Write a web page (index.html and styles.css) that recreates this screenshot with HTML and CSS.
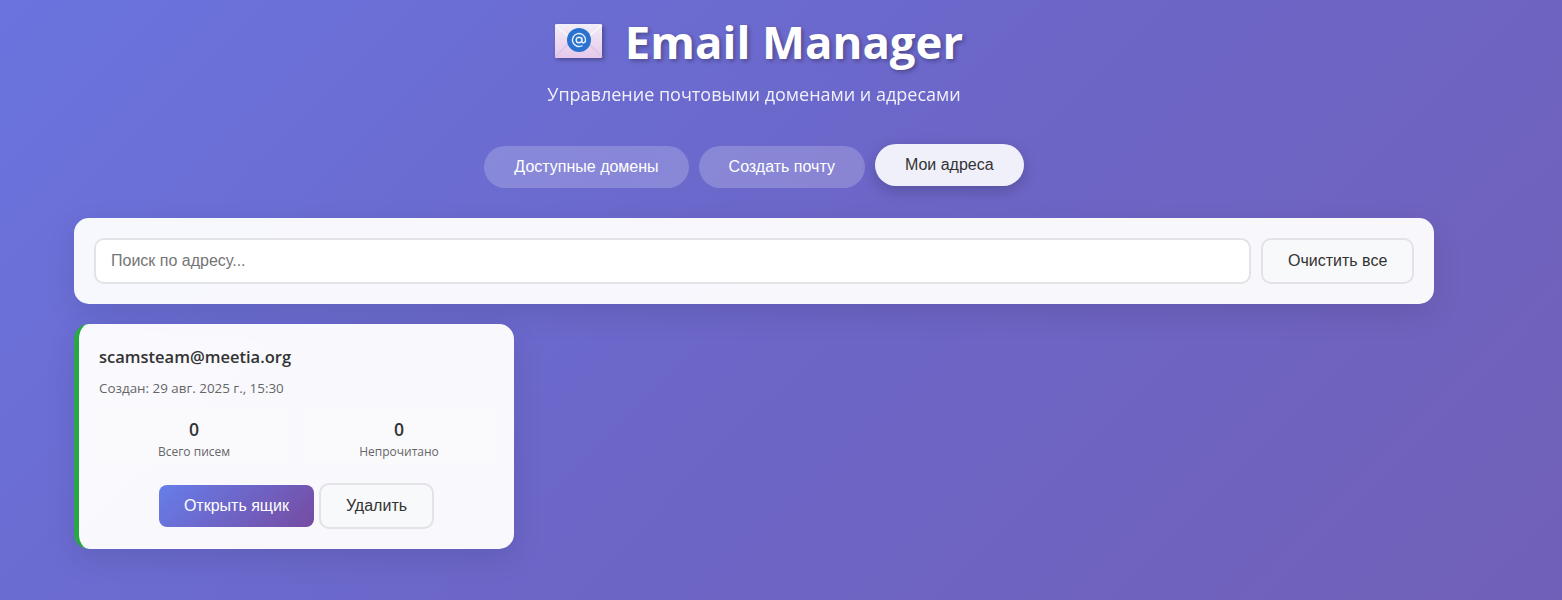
FILE: index.html
```html
<!DOCTYPE html>
<html>
<head>
  <title>Email Manager</title>
  <link rel="stylesheet" href="styles.css">
</head>
<body>

  <div class="container">
    <header class="header">
      <h1>
        <svg class="logo" width="48" height="36" viewBox="0 0 48 36">
          <defs>
            <linearGradient id="env" x1="0" y1="0" x2="0" y2="1">
              <stop offset="0" stop-color="#f2eef8"/>
              <stop offset="1" stop-color="#e6c8ea"/>
            </linearGradient>
          </defs>
          <rect x="0" y="1" width="47" height="34" rx="1.5" fill="url(#env)"/>
          <path d="M0 34 L17 17 M47 34 L30 17" stroke="#d9c4e6" stroke-width="1.5" fill="none"/>
          <path d="M0 2 L23.500 22 L47 2" stroke="#f8f6fb" stroke-width="1.500" fill="none"/>
          <circle cx="24" cy="17" r="12" fill="#2a72cf"/>
          <circle cx="24" cy="17" r="2.800" fill="none" stroke="#e8f0fb" stroke-width="1.400"/>
          <path d="M26.800 14.500 V18 C26.800 20.500 30.500 20.500 30.500 17 A6.500 6.500 0 1 0 27.500 22.500" fill="none" stroke="#e8f0fb" stroke-width="1.400"/>
        </svg>
        <span>Email Manager</span>
      </h1>
      <p>Управление почтовыми доменами и адресами</p>
    </header>

    <nav class="tabs">
      <button class="tab">Доступные домены</button>
      <button class="tab">Создать почту</button>
      <button class="tab active">Мои адреса</button>
    </nav>

    <div class="search-panel">
      <input type="text" class="search-input" placeholder="Поиск по адресу...">
      <button class="btn btn-secondary btn-clear">Очистить все</button>
    </div>

    <div class="email-grid">
      <div class="email-card">
        <div class="email-address">scamsteam@meetia.org</div>
        <div class="email-date">Создан: 29 авг. 2025 г., 15:30</div>
        <div class="email-stats">
          <div class="stat">
            <div class="stat-value">0</div>
            <div class="stat-label">Всего писем</div>
          </div>
          <div class="stat">
            <div class="stat-value">0</div>
            <div class="stat-label">Непрочитано</div>
          </div>
        </div>
        <div class="email-actions">
          <button class="btn btn-primary">Открыть ящик</button>
          <button class="btn btn-secondary">Удалить</button>
        </div>
      </div>
    </div>
  </div>

</body>
</html>
```

FILE: styles.css
```css
* {
  box-sizing: border-box;
}

body {
  font-family: 'Open Sans', sans-serif;
  background: linear-gradient(135deg, #6a74de 0%, #6c66c8 50%, #7160b8 100%);
  height: 600px;
  margin: 0;
  overflow: hidden;
  color: #333;
}

.container {
  width: 1360px;
  margin-left: 74px;
}

.header {
  text-align: center;
  color: white;
  height: 144px;
  padding-top: 9px;
}

.header h1 {
  display: flex;
  align-items: center;
  justify-content: center;
  gap: 22px;
  margin: 0;
  padding-left: 10px;
  font-size: 45.5px;
  line-height: 64px;
  font-weight: 700;
  text-shadow: 2px 2px 4px rgba(0, 0, 0, 0.3);
}

.logo {
  filter: drop-shadow(2px 2px 2px rgba(0, 0, 0, 0.3));
}

.header p {
  margin: 9px 0 0;
  font-size: 18px;
  line-height: 24px;
  opacity: 0.9;
}

.tabs {
  display: flex;
  justify-content: center;
  gap: 10px;
  height: 74px;
}

.tab {
  height: 42px;
  margin-top: 2px;
  padding: 0 30px;
  border: none;
  border-radius: 25px;
  background: rgba(255, 255, 255, 0.2);
  color: white;
  font-family: 'Liberation Sans', sans-serif;
  font-size: 16px;
}

.tab.active {
  margin-top: 0;
  background: rgba(255, 255, 255, 0.9);
  color: #333;
  box-shadow: 0 5px 15px rgba(0, 0, 0, 0.2);
}

.search-panel {
  display: flex;
  gap: 10px;
  padding: 20px;
  margin-bottom: 20px;
  background: rgba(255, 255, 255, 0.95);
  border-radius: 15px;
  box-shadow: 0 10px 30px rgba(0, 0, 0, 0.1);
}

.search-input {
  flex: 1;
  height: 46px;
  padding: 0 15px;
  border: 2px solid #e2e3e7;
  border-radius: 10px;
  background: white;
  font-family: 'Liberation Sans', sans-serif;
  font-size: 16px;
}

.btn {
  border-radius: 10px;
  font-family: 'Liberation Sans', sans-serif;
  font-size: 16px;
  white-space: nowrap;
}

.btn-primary {
  width: 155px;
  height: 42px;
  border: none;
  border-radius: 8px;
  background: linear-gradient(135deg, #667eea 0%, #764ba2 100%);
  color: white;
}

.btn-secondary {
  height: 46px;
  padding: 0 25px;
  border: 2px solid #e2e3e7;
  background: #f8f9fa;
  color: #333;
}

.btn-clear {
  width: 153px;
}

.email-card {
  width: 440px;
  height: 225px;
  padding: 20px;
  background: rgba(255, 255, 255, 0.96);
  border-left: 5px solid #28a745;
  border-radius: 15px;
  box-shadow: 0 10px 30px rgba(0, 0, 0, 0.1);
}

.email-address {
  font-size: 16.5px;
  line-height: 26px;
  font-weight: 600;
}

.email-date {
  margin-top: 9px;
  font-size: 13.4px;
  line-height: 18px;
  color: #666;
}

.email-stats {
  display: grid;
  grid-template-columns: 1fr 1fr;
  gap: 15px;
  margin-top: 11px;
}

.stat {
  height: 57px;
  padding-top: 9px;
  text-align: center;
  background: #fafafd;
  border-radius: 8px;
}

.stat-value {
  font-size: 17.6px;
  line-height: 24px;
  font-weight: 600;
}

.stat-label {
  margin-top: 3px;
  font-size: 12px;
  line-height: 16px;
  color: #666;
}

.email-actions {
  display: flex;
  align-items: center;
  justify-content: center;
  gap: 5px;
  margin-top: 18px;
}
```
